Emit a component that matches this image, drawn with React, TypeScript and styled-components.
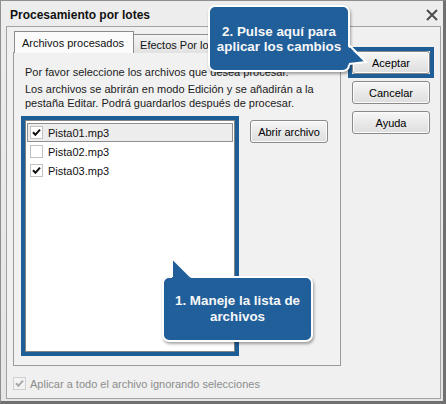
import styled, { createGlobalStyle } from 'styled-components';

const GlobalStyle = createGlobalStyle`
  html, body {
    margin: 0;
    padding: 0;
    background: #ffffff;
  }
  body {
    font-family: "Liberation Sans", Arial, sans-serif;
    font-size: 11px;
    color: #1b1b1b;
  }
  * {
    box-sizing: border-box;
  }
`;

const Window = styled.div`
  position: relative;
  width: 446px;
  height: 404px;
  display: flex;
  flex-direction: column;
  padding: 0 2px 2px 5px;
  background: linear-gradient(#ededed, #e5e5e5);
  border: 1px solid #8f8f8f;
  border-right: 3px solid #707070;
  border-bottom: 3px solid #707070;
`;

const TitleBar = styled.div`
  height: 25px;
  display: flex;
  align-items: center;
  justify-content: space-between;
  padding: 2px 3px 0 4px;
`;

const Title = styled.span`
  font-weight: bold;
  font-size: 12px;
  color: #111;
`;

const Client = styled.div`
  flex: 1;
  display: grid;
  grid-template-columns: 328px 78px;
  grid-template-rows: 334px auto;
  align-content: start;
  column-gap: 11px;
  padding: 5px 0 0 6px;
  background: #f0f0f0;
  border: 1px solid #a3a3a3;
`;

const TabArea = styled.div`
  display: flex;
  flex-direction: column;
`;

const TabStrip = styled.div`
  height: 21px;
  display: flex;
  align-items: flex-end;
  padding-left: 1px;
  margin-bottom: -1px;
`;

const Tab = styled.div<{ $active?: boolean }>`
  position: relative;
  z-index: ${p => (p.$active ? 2 : 1)};
  height: ${p => (p.$active ? 22 : 19)}px;
  display: flex;
  align-items: center;
  padding: ${p => (p.$active ? '0 9px 0 7px' : '1px 8px 0 6px')};
  border: 1px solid #8c8c8c;
  border-bottom: none;
  border-left-width: ${p => (p.$active ? 1 : 0)}px;
  background: ${p => (p.$active ? '#fbfbfb' : 'linear-gradient(#f4f4f4, #e2e2e2)')};
  color: #111;
  white-space: nowrap;
`;

const Panel = styled.div`
  flex: 1;
  display: flex;
  flex-direction: column;
  padding: 12px 11px;
  background: #f1f1f1;
  border: 1px solid #9b9b9b;
`;

const Note = styled.p<{ $gap?: number }>`
  margin: 0 0 ${p => p.$gap ?? 0}px;
  line-height: 14px;
`;

const FileRow = styled.div`
  display: flex;
  gap: 15px;
  align-items: flex-start;
`;

// blue annotation frame drawn around a control
const Spotlight = styled.div`
  border: 4px solid #1f5d97;
  margin: -4px;
  display: inline-flex;
`;

const ListBox = styled.div`
  width: 210px;
  height: 232px;
  padding: 2px 1px;
  background: #ffffff;
  border: 1px solid #848484;
`;

const ListItem = styled.div<{ $focused?: boolean }>`
  height: 19px;
  display: flex;
  align-items: center;
  gap: 5px;
  padding-left: 2px;
  border: 1px solid ${p => (p.$focused ? '#8f8f8f' : 'transparent')};
  background: ${p => (p.$focused ? '#ededed' : 'transparent')};
  color: #111;
`;

const Box = styled.span<{ $disabled?: boolean }>`
  width: 13px;
  height: 13px;
  flex: none;
  display: flex;
  align-items: center;
  justify-content: center;
  background: ${p => (p.$disabled ? '#f3f3f3' : '#ffffff')};
  border: 1px solid ${p => (p.$disabled ? '#cfcfcf' : '#c2c2c2')};
`;

const Button = styled.button`
  width: 78px;
  height: 23px;
  padding: 0;
  font-family: "Liberation Sans", Arial, sans-serif;
  font-size: 11px;
  color: #000;
  background: linear-gradient(#f7f7f7, #e9e9e9 50%, #dedede);
  border: 1px solid #8a8a8a;
  border-radius: 3px;
  box-shadow: inset 0 0 0 1px #fbfbfb;
`;

const ButtonStack = styled.div`
  display: flex;
  flex-direction: column;
  gap: 7px;
  padding-top: 19px;
`;

const Footer = styled.label`
  grid-column: 1 / span 2;
  align-self: start;
  display: flex;
  align-items: center;
  gap: 4px;
  margin-top: 11px;
  color: #8c8c8c;
`;

const Callout = styled.div<{ $left: number; $top: number; $width: number; $height: number; $lh: number }>`
  position: absolute;
  left: ${p => p.$left}px;
  top: ${p => p.$top}px;
  width: ${p => p.$width}px;
  height: ${p => p.$height}px;
  display: flex;
  align-items: center;
  justify-content: center;
  text-align: center;
  font-weight: bold;
  font-size: 13.4px;
  line-height: ${p => p.$lh}px;
  color: #f7f7f7;
  background: #215f9b;
  border: 2px solid #ffffff;
  border-radius: 7px;
  box-shadow: 1px 2px 3px rgba(0, 0, 0, 0.35);
  z-index: 5;
`;

const Tail = styled.svg`
  position: absolute;
  left: -2px;
  top: -2px;
  width: 1px;
  height: 1px;
  overflow: visible;
`;

const Check = ({ color = '#111' }: { color?: string }) => (
  <svg width="9" height="9" viewBox="0 0 9 9">
    <path d="M1 4.3 L3.4 6.8 L8 1.6" fill="none" stroke={color} strokeWidth="2" />
  </svg>
);

const CloseIcon = () => (
  <svg width="12" height="12" viewBox="0 0 12 12">
    <path d="M1 1 L11 11 M11 1 L1 11" stroke="#4c4c4c" strokeWidth="2" />
  </svg>
);

const files = [
  { name: 'Pista01.mp3', checked: true },
  { name: 'Pista02.mp3', checked: false },
  { name: 'Pista03.mp3', checked: true },
];

export default function App() {
  return (
    <>
      <GlobalStyle />
      <Window>
        <TitleBar>
          <Title>Procesamiento por lotes</Title>
          <CloseIcon />
        </TitleBar>
        <Client>
          <TabArea>
            <TabStrip>
              <Tab $active>Archivos procesados</Tab>
              <Tab>Efectos Por lotes</Tab>
            </TabStrip>
            <Panel>
              <Note $gap={3}>Por favor seleccione los archivos que desea procesar.</Note>
              <Note $gap={10}>
                Los archivos se abrirán en modo Edición y se añadirán a la
                <br />
                pestaña Editar. Podrá guardarlos después de procesar.
              </Note>
              <FileRow>
                <Spotlight>
                  <ListBox>
                    {files.map((f, i) => (
                      <ListItem key={f.name} $focused={i === 0}>
                        <Box>{f.checked && <Check />}</Box>
                        {f.name}
                      </ListItem>
                    ))}
                  </ListBox>
                </Spotlight>
                <Button>Abrir archivo</Button>
              </FileRow>
            </Panel>
          </TabArea>
          <ButtonStack>
            <Spotlight>
              <Button>Aceptar</Button>
            </Spotlight>
            <Button>Cancelar</Button>
            <Button>Ayuda</Button>
          </ButtonStack>
          <Footer>
            <Box $disabled>
              <Check color="#a9a9a9" />
            </Box>
            Aplicar a todo el archivo ignorando selecciones
          </Footer>
        </Client>

        <Callout $left={207} $top={4} $width={142} $height={67} $lh={15}>
          2. Pulse aquí para
          <br />
          aplicar los cambios
          <Tail>
            <polygon points="137,39 158,57 137,60" fill="#215f9b" />
            <polyline points="141,40 158,57 141,59" fill="none" stroke="#ffffff" strokeWidth="2" />
          </Tail>
        </Callout>

        <Callout $left={161} $top={275} $width={151} $height={66} $lh={16}>
          1. Maneje la lista de
          <br />
          archivos
          <Tail>
            <polygon points="10,5 10,-18 29,1 29,5" fill="#215f9b" />
            <polyline points="10,1 10,-18 29,1" fill="none" stroke="#ffffff" strokeWidth="2" />
          </Tail>
        </Callout>
      </Window>
    </>
  );
}
